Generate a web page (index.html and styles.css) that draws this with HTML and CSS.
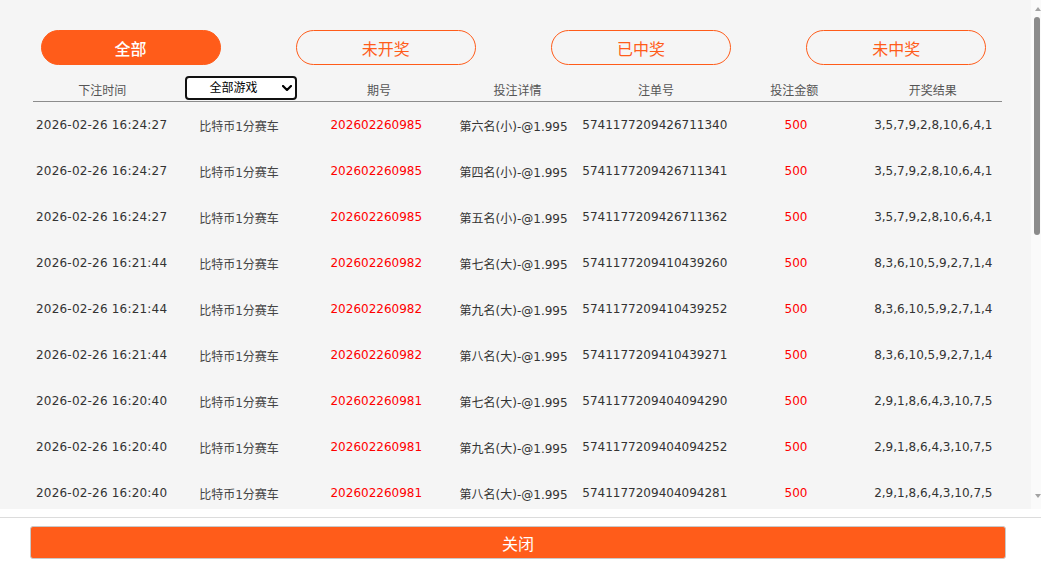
FILE: index.html
```html
<!DOCTYPE html>
<html lang="zh-CN">
<head>
  <meta charset="UTF-8" />
  <title>投注记录</title>
  <meta name="viewport" content="width=device-width, initial-scale=1.0" />
  <link rel="stylesheet" href="styles.css">
</head>
<body>

  <div class="record-pane">
    <div class="record-scroll">
      <!-- status tabs -->
      <div class="tabs">
        <button class="tab active">全部</button>
        <button class="tab">未开奖</button>
        <button class="tab">已中奖</button>
        <button class="tab">未中奖</button>
      </div>

      <div class="record-table">
        <div class="record-head">
          <span>下注时间</span>
          <div class="game-select">
            <select>
              <option>全部游戏</option>
              <option>比特币1分赛车</option>
            </select>
            <svg class="chevron" viewBox="0 0 10 6" width="10" height="6">
              <path d="M1 1l4 4 4-4" fill="none" stroke="#000" stroke-width="2.2" stroke-linecap="round" stroke-linejoin="round"/>
            </svg>
          </div>
          <span>期号</span>
          <span>投注详情</span>
          <span>注单号</span>
          <span>投注金额</span>
          <span>开奖结果</span>
        </div>

        <div class="record-row"><span class="time">2026-02-26 16:24:27</span><span class="game">比特币1分赛车</span><span class="red">202602260985</span><span>第六名(小)-@1.995</span><span>5741177209426711340</span><span class="red">500</span><span>3,5,7,9,2,8,10,6,4,1</span></div>
        <div class="record-row"><span class="time">2026-02-26 16:24:27</span><span class="game">比特币1分赛车</span><span class="red">202602260985</span><span>第四名(小)-@1.995</span><span>5741177209426711341</span><span class="red">500</span><span>3,5,7,9,2,8,10,6,4,1</span></div>
        <div class="record-row"><span class="time">2026-02-26 16:24:27</span><span class="game">比特币1分赛车</span><span class="red">202602260985</span><span>第五名(小)-@1.995</span><span>5741177209426711362</span><span class="red">500</span><span>3,5,7,9,2,8,10,6,4,1</span></div>
        <div class="record-row"><span class="time">2026-02-26 16:21:44</span><span class="game">比特币1分赛车</span><span class="red">202602260982</span><span>第七名(大)-@1.995</span><span>5741177209410439260</span><span class="red">500</span><span>8,3,6,10,5,9,2,7,1,4</span></div>
        <div class="record-row"><span class="time">2026-02-26 16:21:44</span><span class="game">比特币1分赛车</span><span class="red">202602260982</span><span>第九名(大)-@1.995</span><span>5741177209410439252</span><span class="red">500</span><span>8,3,6,10,5,9,2,7,1,4</span></div>
        <div class="record-row"><span class="time">2026-02-26 16:21:44</span><span class="game">比特币1分赛车</span><span class="red">202602260982</span><span>第八名(大)-@1.995</span><span>5741177209410439271</span><span class="red">500</span><span>8,3,6,10,5,9,2,7,1,4</span></div>
        <div class="record-row"><span class="time">2026-02-26 16:20:40</span><span class="game">比特币1分赛车</span><span class="red">202602260981</span><span>第七名(大)-@1.995</span><span>5741177209404094290</span><span class="red">500</span><span>2,9,1,8,6,4,3,10,7,5</span></div>
        <div class="record-row"><span class="time">2026-02-26 16:20:40</span><span class="game">比特币1分赛车</span><span class="red">202602260981</span><span>第九名(大)-@1.995</span><span>5741177209404094252</span><span class="red">500</span><span>2,9,1,8,6,4,3,10,7,5</span></div>
        <div class="record-row"><span class="time">2026-02-26 16:20:40</span><span class="game">比特币1分赛车</span><span class="red">202602260981</span><span>第八名(大)-@1.995</span><span>5741177209404094281</span><span class="red">500</span><span>2,9,1,8,6,4,3,10,7,5</span></div>
        <div class="record-row"><span class="time">2026-02-26 16:18:12</span><span class="game">比特币1分赛车</span><span class="red">202602260979</span><span>第三名(小)-@1.995</span><span>5741177209389120417</span><span class="red">500</span><span>6,2,9,4,10,1,8,3,5,7</span></div>
        <div class="record-row"><span class="time">2026-02-26 16:18:12</span><span class="game">比特币1分赛车</span><span class="red">202602260979</span><span>第二名(小)-@1.995</span><span>5741177209389120425</span><span class="red">500</span><span>6,2,9,4,10,1,8,3,5,7</span></div>
        <div class="record-row"><span class="time">2026-02-26 16:18:12</span><span class="game">比特币1分赛车</span><span class="red">202602260979</span><span>第一名(大)-@1.995</span><span>5741177209389120433</span><span class="red">500</span><span>6,2,9,4,10,1,8,3,5,7</span></div>
      </div>
    </div>

    <!-- scrollbar of the record list -->
    <div class="scrollbar">
      <svg class="arrow" viewBox="0 0 6 4" width="6" height="4"><path d="M0 4L3 0L6 4Z" fill="#a3a3a3"/></svg>
      <div class="track"><div class="thumb"></div></div>
      <svg class="arrow" viewBox="0 0 6 4" width="6" height="4"><path d="M0 0L3 4L6 0Z" fill="#a3a3a3"/></svg>
    </div>
  </div>

  <div class="footer">
    <button class="close-btn">关闭</button>
  </div>

</body>
</html>
```

FILE: styles.css
```css
html, body {
  margin: 0;
  padding: 0;
  height: 100%;
  overflow: hidden;
  background: white;
  font-family: 'DejaVu Sans', 'Noto Sans CJK SC', sans-serif;
}

.record-pane {
  display: flex;
  height: 509px;
}

.record-scroll {
  flex: 1;
  overflow: hidden;
  background: #f5f5f5;
}

.scrollbar {
  width: 10px;
  display: flex;
  flex-direction: column;
  background: #fafafa;
}

.scrollbar .arrow {
  display: block;
  margin: 7px 0 6px 4px;
}

.scrollbar .arrow:last-child {
  margin: 6px 0 11px 4px;
}

.track {
  flex: 1;
}

.thumb {
  width: 6px;
  height: 218px;
  margin-left: 3px;
  border-radius: 3px;
  background: #8b8b8b;
}

/* Tabs */
.tabs {
  display: flex;
  justify-content: space-around;
  padding: 30px 7px 0 3px;
}

.tab {
  width: 180px;
  height: 35px;
  box-sizing: border-box;
  border: 1px solid #ff5c1a;
  border-radius: 18px;
  background: transparent;
  color: #ff5c1a;
  font-family: 'DejaVu Sans', 'Noto Sans CJK SC', sans-serif;
  font-size: 16px;
  padding: 0;
  cursor: pointer;
}

.tab.active {
  background: #ff5c1a;
  color: white;
  font-weight: 500;
}

/* Table */
.record-table {
  margin: 11px 29px 0 33px;
}

.record-head,
.record-row {
  display: grid;
  grid-template-columns: repeat(7, 1fr);
  text-align: center;
}

.record-head {
  height: 25px;
  align-items: end;
  border-bottom: 1px solid #8c8c8c;
  font-size: 12px;
  line-height: 16px;
  color: #555;
}

.record-head > span {
  padding-bottom: 2px;
}

.game-select {
  position: relative;
  align-self: start;
  justify-self: center;
  width: 112px;
  height: 24px;
}

.game-select select {
  appearance: none;
  -webkit-appearance: none;
  width: 100%;
  height: 24px;
  box-sizing: border-box;
  border: 2px solid #111;
  border-radius: 4px;
  background: white;
  color: #000;
  font-family: 'DejaVu Sans', 'Noto Sans CJK SC', sans-serif;
  font-size: 12px;
  text-align-last: center;
  padding: 0 18px 0 4px;
  outline: none;
}

.chevron {
  position: absolute;
  right: 5px;
  top: 9px;
  pointer-events: none;
}

.record-row {
  height: 46px;
  align-items: center;
  font-size: 12px;
  color: #333;
}

.record-row .time {
  letter-spacing: 0.2px;
}

.record-row .game {
  color: #444;
}

.record-row .red {
  color: #ff0000;
}

/* Footer */
.footer {
  margin-top: 8px;
  border-top: 1px solid #dcdcdc;
  padding: 8px 35px 0 30px;
}

.close-btn {
  display: block;
  width: 100%;
  height: 33px;
  background: #ff5c1a;
  border: 1px solid #c9c9c9;
  border-radius: 3px;
  color: white;
  font-family: 'DejaVu Sans', 'Noto Sans CJK SC', sans-serif;
  font-size: 16px;
  cursor: pointer;
}
```
